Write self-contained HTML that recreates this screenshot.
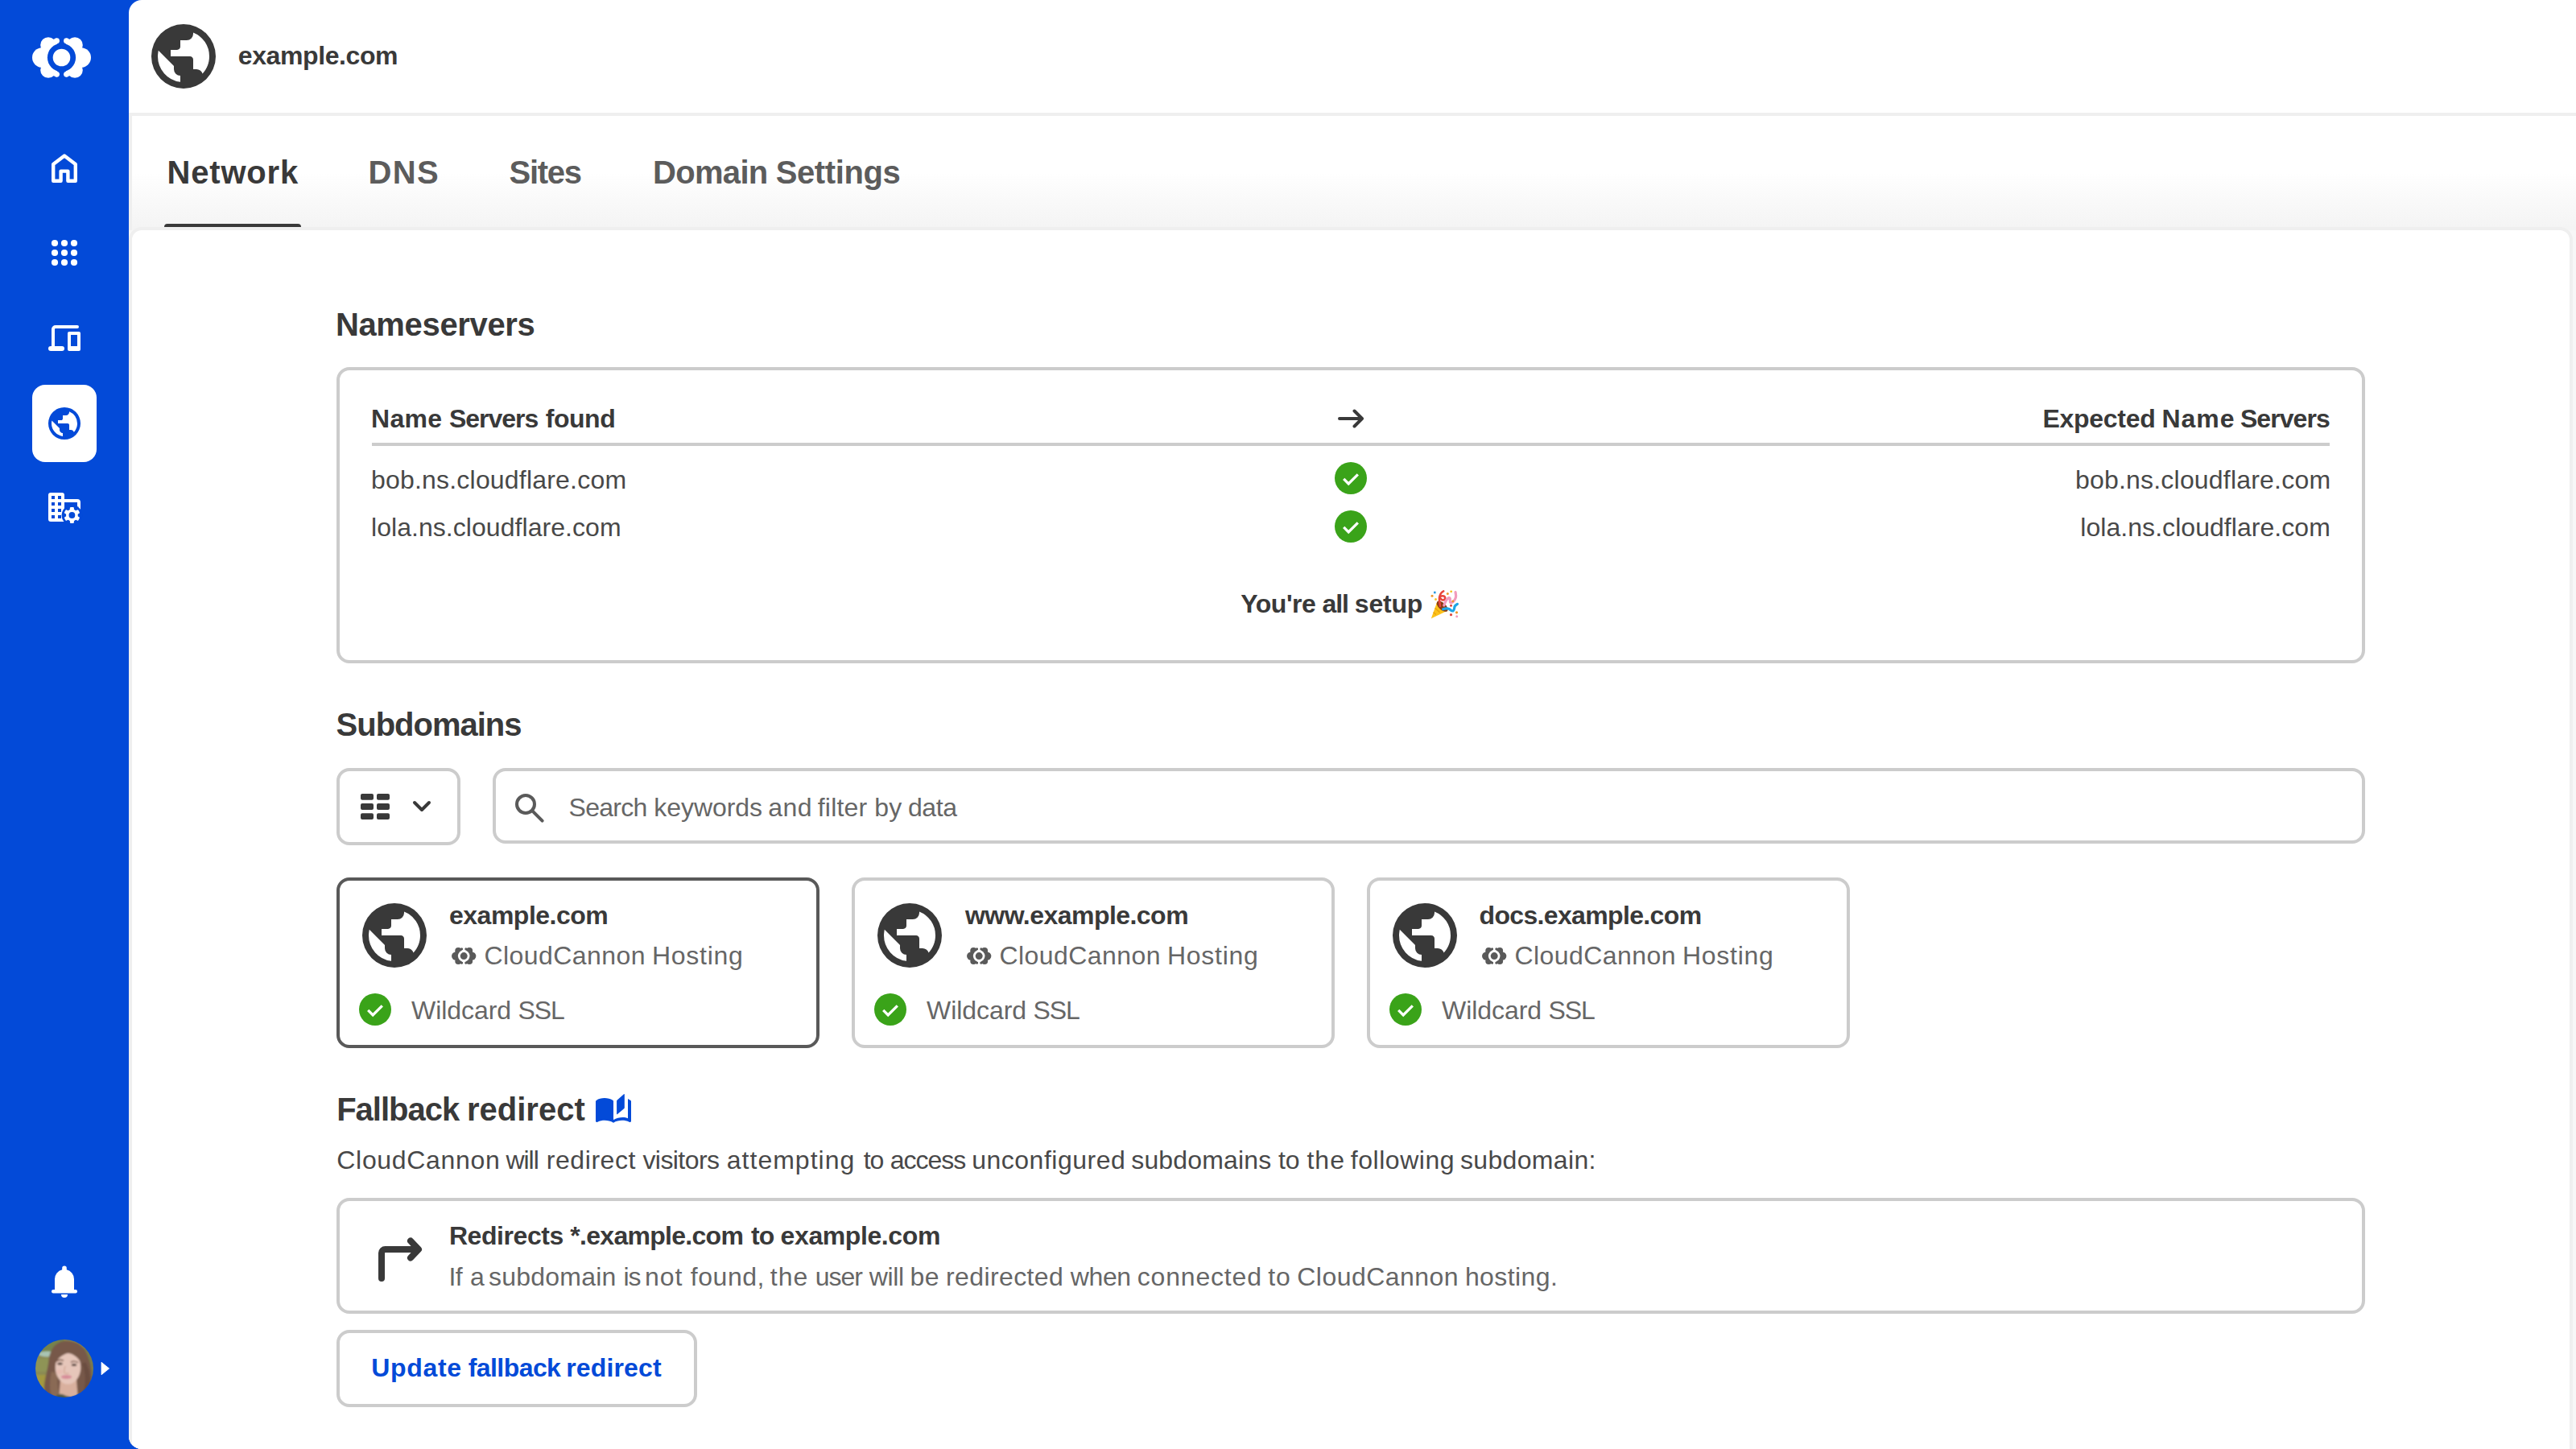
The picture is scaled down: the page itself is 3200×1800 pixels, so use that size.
<!DOCTYPE html>
<html lang="en">
<head>
<meta charset="utf-8">
<title>example.com - Network - CloudCannon</title>
<style>
*{box-sizing:border-box;margin:0;padding:0}
html,body{width:3200px;height:1800px;overflow:hidden}
body{position:relative;background:#034ad8;font-family:"Liberation Sans",sans-serif;color:#393939;font-size:32px}
.t{position:absolute;white-space:nowrap;line-height:1;font-size:32px;font-weight:400;color:#484848}
.g{color:#666}
.b{font-weight:700;color:#393939}
.h{font-size:40px;font-weight:700;color:#393939}
.h.g{color:#5c5c5c}
.ic{position:absolute;display:block;overflow:visible}
.abs{position:absolute}
.side{position:absolute;left:0;top:0;width:160px;height:1800px;background:#034ad8}
.active-tile{position:absolute;left:40px;top:478px;width:80px;height:96px;border-radius:16px;background:#fff}
.main{position:absolute;left:160px;top:0;width:3040px;height:1800px;background:#fff;border-radius:16px 0 0 16px;overflow:hidden}
.hline{position:absolute;left:0;top:140px;width:3040px;height:4px;background:#efefef}
.tabs{position:absolute;left:0;top:144px;width:3040px;height:142px;border-left:4px solid #efefef;background:linear-gradient(#fff 0,#fff 70px,#f4f4f4 138px,#f4f4f4 142px)}
.under{position:absolute;left:204px;top:278px;width:170px;height:4px;background:#393939;border-radius:5px 5px 0 0}
.below{position:absolute;left:0;top:286px;width:3040px;height:1514px;background:#f7f7f7}
.page{position:absolute;left:0;top:282px;width:3036px;height:1600px;background:#fff;border:4px solid #efefef;border-radius:16px}
.box{position:absolute;background:#fff;border:4px solid #ccc;border-radius:16px}
.sub{width:600px;height:212px}
.sel{border-color:#595959}
.rule{position:absolute;left:462px;top:550px;width:2432px;height:4px;background:#ccc}
</style>
</head>
<body>
<nav class="side">
  <svg class="ic" style="left:40px;top:45.5px" width="73" height="51.0" viewBox="0 0 73 51"><g fill="#fff"><circle cx="12.3" cy="25.5" r="12.3"/><circle cx="20" cy="10" r="9.8"/><circle cx="20" cy="41" r="9.8"/><circle cx="30.500" cy="4.700" r="3.400"/><circle cx="30.500" cy="46.300" r="3.400"/><path d="M12 8 30.6 1.5 33.7 5 28 13 28 38 33.7 46 30.6 49.5 12 43Z"/><g transform="translate(73 0) scale(-1 1)"><circle cx="12.3" cy="25.5" r="12.3"/><circle cx="20" cy="10" r="9.8"/><circle cx="20" cy="41" r="9.8"/><circle cx="30.500" cy="4.700" r="3.400"/><circle cx="30.500" cy="46.300" r="3.400"/><path d="M12 8 30.6 1.5 33.7 5 28 13 28 38 33.7 46 30.6 49.5 12 43Z"/></g></g><circle cx="36.5" cy="25.5" r="17.6" fill="#034ad8"/><rect x="34" y="0" width="5" height="51" fill="#034ad8"/><circle cx="36.5" cy="25.5" r="10.8" fill="#fff"/></svg>
  <svg class="ic" style="left:56px;top:185px" width="48" height="48" viewBox="0 0 24 24"><path fill="none" stroke="#fff" stroke-width="2.200" stroke-linejoin="round" d="M5.100 19.900V9.450L12 4.300l6.900 5.150V19.900h-4.700v-6.100H9.800v6.100Z"/></svg>
  <svg class="ic" style="left:56px;top:290px" width="48" height="48" viewBox="0 0 24 24" fill="#fff"><circle cx="6" cy="6" r="2.050"/><circle cx="12" cy="6" r="2.050"/><circle cx="18" cy="6" r="2.050"/><circle cx="6" cy="12" r="2.050"/><circle cx="12" cy="12" r="2.050"/><circle cx="18" cy="12" r="2.050"/><circle cx="6" cy="18" r="2.050"/><circle cx="12" cy="18" r="2.050"/><circle cx="18" cy="18" r="2.050"/></svg>
  <svg class="ic" style="left:56px;top:396px" width="48" height="48" viewBox="0 0 24 24"><path fill="none" stroke="#fff" stroke-width="2" stroke-linecap="round" stroke-linejoin="round" d="M20 5H6.500A1.500 1.500 0 0 0 5 6.500V17"/><rect x="2" y="17" width="10" height="3" rx="1.500" fill="#fff"/><path fill="#fff" fill-rule="evenodd" d="M15 8h6a1 1 0 0 1 1 1v10a1 1 0 0 1-1 1h-6a1 1 0 0 1-1-1V9a1 1 0 0 1 1-1Zm1 2v7h4v-7Z"/></svg>
  <div class="active-tile"></div>
  <svg class="ic" style="left:56px;top:502px" width="48" height="48" viewBox="0 -960 960 960"><path fill="#034ad8" d="M480-80q-83 0-156-31.500T197-197q-54-54-85.500-127T80-480q0-83 31.500-156T197-763q54-54 127-85.500T480-880q83 0 156 31.500T763-763q54 54 85.500 127T880-480q0 83-31.500 156T763-197q-54 54-127 85.500T480-80Zm-40-82v-78q-33 0-56.500-23.500T360-320v-40L168-552q-3 18-5.500 36t-2.500 36q0 121 79.500 212T440-162Zm276-102q20-22 36-47.500t26.500-53q10.500-27.500 16-56.500t5.500-59q0-98-54.500-179T600-776v16q0 33-23.500 56.500T520-680h-80v80q0 17-11.500 28.500T400-560h-80v80h240q17 0 28.500 11.500T600-440v120h40q26 0 47 15.500t29 40.500Z"/></svg>
  <svg class="ic" style="left:56px;top:606px" width="48" height="48" viewBox="0 0 24 24"><path fill="#fff" fill-rule="evenodd" d="M3.500 3h7A1.500 1.500 0 0 1 12 4.500V7h8a2 2 0 0 1 2 2v6h-2V9h-8v12H3.500A1.500 1.500 0 0 1 2 19.500v-15A1.500 1.500 0 0 1 3.500 3ZM4 5v2h2V5Zm4 0v2h2V5ZM4 9v2h2V9Zm4 0v2h2V9Zm-4 4v2h2v-2Zm4 0v2h2v-2Zm-4 4v2h2v-2Zm4 0v2h2v-2Z"/><circle cx="16.700" cy="17" r="6.400" fill="#034ad8"/><g fill="#fff" transform="translate(16.700 17)"><circle r="3.700"/><rect x="-1.250" y="-5" width="2.500" height="10" rx=".6"/><rect x="-1.250" y="-5" width="2.500" height="10" rx=".6" transform="rotate(60)"/><rect x="-1.250" y="-5" width="2.500" height="10" rx=".6" transform="rotate(120)"/></g><circle cx="16.700" cy="17" r="1.950" fill="#034ad8"/></svg>
  <svg class="ic" style="left:56px;top:1568px" width="48" height="48" viewBox="0 0 24 24" fill="#fff"><path d="M6 17.200V10.500a6 6 0 0 1 4.600-5.850V3.600a1.400 1.400 0 0 1 2.800 0v1.050A6 6 0 0 1 18 10.500v6.700Z"/><rect x="4" y="17" width="16" height="2.200" rx="1.100"/><path d="M10 20h4a2 2 0 0 1-4 0Z"/></svg>
  <svg class="ic" style="left:44px;top:1664px" width="72" height="72" viewBox="0 0 72 72"><defs><clipPath id="av"><circle cx="36" cy="36" r="36"/></clipPath><filter id="soft" x="-10%" y="-10%" width="120%" height="120%"><feGaussianBlur stdDeviation="1.100"/></filter></defs><g clip-path="url(#av)"><g filter="url(#soft)"><rect x="-4" y="-4" width="80" height="80" fill="#8b8a52"/><rect x="-4" y="-4" width="40" height="22" fill="#74824d"/><ellipse cx="15" cy="18" rx="11" ry="3.600" fill="#a9c4b3"/><rect x="-4" y="24" width="24" height="16" fill="#8e9457"/><rect x="-4" y="44" width="22" height="32" fill="#a3983f"/><path d="M58 10h18v40H60Z" fill="#7a7c4c"/><path d="M40 1.500C26 1 18 12 16.500 26 15 40 10 52 11 64c.5 6 4 12 8 14h40c6-6 10-16 11-26 1-12-2-24-6-34C60 8 52 2 40 1.500Z" fill="#77594a"/><path d="M20 40c-2 10-4 22 2 36h12c-6-10-8-22-6-34Z" fill="#8a6a55"/><path d="M58 30c4 10 6 24 0 40l8-6c4-12 2-26-4-36Z" fill="#6a4d3f"/><path d="M31 50h20l2 26H29Z" fill="#d9b09e"/><path d="M22 76c3-8 8-10 14-7 6 3 12 3 17-1 4 2 6 5 7 8Z" fill="#4d5a4a"/><ellipse cx="40.500" cy="34.500" rx="15.800" ry="21" fill="#e6c6ba"/><path d="M24 31c1-14 9-21 19-20 9 1 14 8 14.500 19C53 22 47 17.500 40 17c-7 2-12 6-16 14Z" fill="#77594a"/><path d="M26 27c2-1.600 6-2 9-.8" stroke="#6a4a3c" stroke-width="1.400" fill="none"/><path d="M44 28c3-1.400 6-1.200 9 .6" stroke="#6a4a3c" stroke-width="1.400" fill="none"/><ellipse cx="30.500" cy="30" rx="3.200" ry="1.500" fill="#4b3a35"/><ellipse cx="48" cy="31.500" rx="3.200" ry="1.500" fill="#4b3a35"/><path d="M37 33c-1 4-2 6-1 8.500 2 1 4 1 5.500 0" stroke="#d3a594" stroke-width="1.300" fill="none"/><ellipse cx="38.500" cy="46.500" rx="6.600" ry="2.500" fill="#d78d99"/><ellipse cx="30" cy="40" rx="4" ry="3" fill="#e8b9b0" opacity=".6"/></g></g></svg>
  <svg class="ic" style="left:126px;top:1691px" width="10" height="18" viewBox="0 0 10 18"><path d="M0 1.200 9.600 9 0 16.800Z" fill="#fff" stroke="#fff" stroke-width=".8" stroke-linejoin="round"/></svg>
</nav>
<div class="main">
  <div class="hline"></div>
  <div class="tabs"></div>
  <div class="below"></div>
  <div class="page"></div>
</div>
<header>
  <svg class="ic" style="left:180px;top:22px" width="96" height="96" viewBox="0 -960 960 960"><path fill="#393939" d="M480-80q-83 0-156-31.500T197-197q-54-54-85.500-127T80-480q0-83 31.500-156T197-763q54-54 127-85.500T480-880q83 0 156 31.500T763-763q54 54 85.500 127T880-480q0 83-31.500 156T763-197q-54 54-127 85.500T480-80Zm-40-82v-78q-33 0-56.500-23.500T360-320v-40L168-552q-3 18-5.500 36t-2.500 36q0 121 79.500 212T440-162Zm276-102q20-22 36-47.500t26.500-53q10.500-27.500 16-56.500t5.500-59q0-98-54.500-179T600-776v16q0 33-23.500 56.500T520-680h-80v80q0 17-11.500 28.500T400-560h-80v80h240q17 0 28.500 11.500T600-440v120h40q26 0 47 15.500t29 40.500Z"/></svg>
  <h1 class="t b" style="left:295.8px;top:52.5px;letter-spacing:-0.4px;">example.com</h1>
</header>
<nav class="tabnav">
  <a class="t h" style="left:207.6px;top:194.1px;letter-spacing:0.79px;">Network</a>
  <a class="t h g" style="left:457.6px;top:194.1px;letter-spacing:1.3px;">DNS</a>
  <a class="t h g" style="left:632.5px;top:194.1px;letter-spacing:-1.25px;">Sites</a>
  <a class="t h g" style="left:811px;top:194.1px;"><span style="letter-spacing:-0.68px">Domain</span> <span style="letter-spacing:-0.4px;margin-left:-1px">Settings</span></a>
  <div class="under"></div>
</nav>
<main>
  <section>
    <h2 class="t h" style="left:416.9px;top:383.1px;letter-spacing:-0.34px;">Nameservers</h2>
    <div class="box" style="left:418px;top:456px;width:2520px;height:368px"></div>
    <span class="t b" style="left:461px;top:503.5px;"><span style="letter-spacing:0.33px">Name</span> <span style="letter-spacing:-1px;margin-left:-0.5px">Servers</span> <span style="letter-spacing:-0.45px;margin-left:0.5px">found</span></span>
    <svg class="ic" style="left:1658px;top:504px" width="40" height="32" viewBox="0 0 40 32"><path d="M6 16h28M24.500 6.500 34 16l-9.500 9.500" fill="none" stroke="#393939" stroke-width="4" stroke-linecap="round" stroke-linejoin="round"/></svg>
    <span class="t b" style="left:2537.4px;top:503.5px;"><span style="letter-spacing:-0.27px">Expected</span> <span style="letter-spacing:1px;margin-left:-1px">Name</span> <span style="letter-spacing:-0.95px;margin-left:-2.5px">Servers</span></span>
    <div class="rule"></div>
    <span class="t" style="left:461.0px;top:579.7px;letter-spacing:0.2px;">bob.ns.cloudflare.com</span>
    <svg class="ic" style="left:1654px;top:570px" width="48" height="48" viewBox="0 0 48 48"><circle cx="24" cy="24" r="20" fill="#3aa319"/><path d="M15.200 24.900 21.200 30.900 32.800 19.300" fill="none" stroke="#fff" stroke-width="3.300" stroke-linecap="butt" stroke-linejoin="miter"/></svg>
    <span class="t" style="left:2578.0px;top:579.7px;letter-spacing:0.2px;">bob.ns.cloudflare.com</span>
    <span class="t" style="left:461.0px;top:639.3px;letter-spacing:0.05px;">lola.ns.cloudflare.com</span>
    <svg class="ic" style="left:1654px;top:630px" width="48" height="48" viewBox="0 0 48 48"><circle cx="24" cy="24" r="20" fill="#3aa319"/><path d="M15.200 24.900 21.200 30.900 32.800 19.300" fill="none" stroke="#fff" stroke-width="3.300" stroke-linecap="butt" stroke-linejoin="miter"/></svg>
    <span class="t" style="left:2584.3px;top:639.3px;letter-spacing:0.05px;">lola.ns.cloudflare.com</span>
    <strong class="t b" style="left:1541.2px;top:734.3px;"><span style="letter-spacing:-0.44px">You're</span> <span style="letter-spacing:-1px;margin-left:-1px">all</span> <span style="letter-spacing:-0.22px;margin-left:-1px">setup</span></strong>
    <span class="t" style="left:1777px;top:733px;width:36px;height:36px;font-size:30px;opacity:0;overflow:hidden">&#127881;</span>
    <svg class="ic" style="left:1777px;top:733px" width="36" height="36" viewBox="0 0 36 36"><path d="M.8 35.400 8.300 14.600C11 13 22 22 21.200 25.600Z" fill="#fcc21b"/><path d="M3.600 27.600 6.800 30.400M5.600 22.200l6 5.600M7.600 17l9.600 8.600" stroke="#e9a20f" stroke-width="1.300" fill="none"/><ellipse cx="14.700" cy="20.200" rx="8.600" ry="4.300" transform="rotate(42 14.700 20.200)" fill="#8a3c14"/><path d="M12 20c-.4-4-1.600-8-.8-11.600.6-2.600 1.800-5.600 5-7M11.600 9.400c1-2.800 6-3 6.600.2.400 2.800-3.600 4-5 1.400" fill="none" stroke="#e8453c" stroke-width="2.600" stroke-linecap="round"/><path d="M16.800 19c1.400-3.600 3-8.600 6-9.400 3.200-.6.200 5.400 2.200 6 2.400.6 5.600-3 6.400-6.400.6-2.600 0-4.600-.4-6.600" fill="none" stroke="#f29bbd" stroke-width="3.200" stroke-linecap="round" stroke-linejoin="round"/><path d="M15.600 23.800c2.600-1 5.200-1.400 7.400-.4 2 1 3.400 3.400 5.200 2.400 2-1.200 1-4.400 2.200-6 .8-1.200 2-1.800 3-2.400" fill="none" stroke="#1ea6e6" stroke-width="3.200" stroke-linecap="round" stroke-linejoin="round"/><g><rect x="4" y="1.700" width="2.600" height="2.600" fill="#2f9be0"/><circle cx="2" cy="7.300" r="1.500" fill="#f0962a"/><circle cx="6.500" cy="11.400" r="1.500" fill="#f7c32d"/><circle cx="21.300" cy="4.600" r="1.500" fill="#f0962a"/><circle cx="25.700" cy="1.800" r="1.400" fill="#f2c21f"/><circle cx="27.800" cy="13.900" r="1.400" fill="#f0962a"/><circle cx="25.500" cy="19.300" r="1.500" fill="#e0453a"/><circle cx="32.500" cy="27.800" r="1.600" fill="#f0962a"/><circle cx="25.500" cy="30.700" r="1.600" fill="#e0453a"/><circle cx="32.700" cy="32.700" r="1.500" fill="#f29bbd"/></g></svg>
  </section>
  <section>
    <h2 class="t h" style="left:417.6px;top:880.4px;letter-spacing:-1.01px;">Subdomains</h2>
    <button class="box" style="left:418px;top:954px;width:154px;height:96px"></button>
    <svg class="ic" style="left:448px;top:986px" width="36" height="32" viewBox="0 0 36 32" fill="#393939"><rect x="0" y="0" width="16" height="7.800" rx="2"/><rect x="20" y="0" width="16" height="7.800" rx="2"/><rect x="0" y="12.100" width="16" height="7.800" rx="2"/><rect x="20" y="12.100" width="16" height="7.800" rx="2"/><rect x="0" y="24.200" width="16" height="7.800" rx="2"/><rect x="20" y="24.200" width="16" height="7.800" rx="2"/></svg>
    <svg class="ic" style="left:510px;top:990px" width="28" height="22" viewBox="0 0 28 22"><path d="M5 7l9 9 9-9" fill="none" stroke="#393939" stroke-width="4" stroke-linecap="round" stroke-linejoin="round"/></svg>
    <div class="box" style="left:612px;top:954px;width:2326px;height:94px"></div>
    <svg class="ic" style="left:634px;top:980px" width="48" height="48" viewBox="0 0 24 24"><circle cx="9.500" cy="9.500" r="5.500" fill="none" stroke="#5a5a5a" stroke-width="2"/><path d="M13.700 13.700 19.800 19.800" stroke="#5a5a5a" stroke-width="2" stroke-linecap="round"/></svg>
    <span class="t g" style="left:706.6px;top:987.0px;"><span style="letter-spacing:-0.76px">Search</span> <span style="letter-spacing:-0.08px">keywords</span> <span style="letter-spacing:0.4px;margin-left:-1.5px">and</span> <span style="letter-spacing:0.2px;margin-left:-2px">filter</span> <span style="letter-spacing:0.2px">by</span> <span style="letter-spacing:-0.33px;margin-left:-1.5px">data</span></span>
    
      <article class="box sub sel" style="left:418px;top:1090px"></article>
      <svg class="ic" style="left:442px;top:1114px" width="96" height="96" viewBox="0 -960 960 960"><path fill="#393939" d="M480-80q-83 0-156-31.500T197-197q-54-54-85.500-127T80-480q0-83 31.500-156T197-763q54-54 127-85.500T480-880q83 0 156 31.500T763-763q54 54 85.500 127T880-480q0 83-31.500 156T763-197q-54 54-127 85.500T480-80Zm-40-82v-78q-33 0-56.500-23.500T360-320v-40L168-552q-3 18-5.500 36t-2.500 36q0 121 79.500 212T440-162Zm276-102q20-22 36-47.500t26.500-53q10.500-27.500 16-56.500t5.500-59q0-98-54.500-179T600-776v16q0 33-23.500 56.500T520-680h-80v80q0 17-11.500 28.500T400-560h-80v80h240q17 0 28.500 11.500T600-440v120h40q26 0 47 15.500t29 40.500Z"/></svg>
      <h3 class="t b" style="left:558.0px;top:1120.9px;letter-spacing:-0.5px;">example.com</h3>
      <svg class="ic" style="left:561px;top:1177.2px" width="30.4" height="21.2" viewBox="0 0 73 51"><g fill="#5a5a5a"><circle cx="12.3" cy="25.5" r="12.3"/><circle cx="20" cy="10" r="9.8"/><circle cx="20" cy="41" r="9.8"/><circle cx="30.500" cy="4.700" r="3.400"/><circle cx="30.500" cy="46.300" r="3.400"/><path d="M12 8 30.6 1.5 33.7 5 28 13 28 38 33.7 46 30.6 49.5 12 43Z"/><g transform="translate(73 0) scale(-1 1)"><circle cx="12.3" cy="25.5" r="12.3"/><circle cx="20" cy="10" r="9.8"/><circle cx="20" cy="41" r="9.8"/><circle cx="30.500" cy="4.700" r="3.400"/><circle cx="30.500" cy="46.300" r="3.400"/><path d="M12 8 30.6 1.5 33.7 5 28 13 28 38 33.7 46 30.6 49.5 12 43Z"/></g></g><circle cx="36.5" cy="25.5" r="17.6" fill="#fff"/><rect x="34" y="0" width="5" height="51" fill="#fff"/><circle cx="36.5" cy="25.5" r="10.8" fill="#5a5a5a"/></svg>
      <span class="t g" style="left:601.5px;top:1170.9px;"><span style="letter-spacing:0.44px">CloudCannon</span> <span style="letter-spacing:0.74px;margin-left:-1px">Hosting</span></span>
      <svg class="ic" style="left:442px;top:1230px" width="48" height="48" viewBox="0 0 48 48"><circle cx="24" cy="24" r="20" fill="#3aa319"/><path d="M15.200 24.900 21.200 30.900 32.800 19.300" fill="none" stroke="#fff" stroke-width="3.300" stroke-linecap="butt" stroke-linejoin="miter"/></svg>
      <span class="t g" style="left:511px;top:1239.2px;"><span style="letter-spacing:-0.06px">Wildcard</span> <span style="letter-spacing:-1px;margin-left:-0.5px">SSL</span></span>
    
      <article class="box sub" style="left:1058px;top:1090px"></article>
      <svg class="ic" style="left:1082px;top:1114px" width="96" height="96" viewBox="0 -960 960 960"><path fill="#393939" d="M480-80q-83 0-156-31.500T197-197q-54-54-85.500-127T80-480q0-83 31.500-156T197-763q54-54 127-85.500T480-880q83 0 156 31.500T763-763q54 54 85.500 127T880-480q0 83-31.500 156T763-197q-54 54-127 85.500T480-80Zm-40-82v-78q-33 0-56.500-23.500T360-320v-40L168-552q-3 18-5.500 36t-2.500 36q0 121 79.500 212T440-162Zm276-102q20-22 36-47.500t26.500-53q10.500-27.500 16-56.500t5.500-59q0-98-54.500-179T600-776v16q0 33-23.500 56.500T520-680h-80v80q0 17-11.500 28.500T400-560h-80v80h240q17 0 28.500 11.500T600-440v120h40q26 0 47 15.500t29 40.500Z"/></svg>
      <h3 class="t b" style="left:1199.0px;top:1120.9px;letter-spacing:-0.54px;">www.example.com</h3>
      <svg class="ic" style="left:1201px;top:1177.2px" width="30.4" height="21.2" viewBox="0 0 73 51"><g fill="#5a5a5a"><circle cx="12.3" cy="25.5" r="12.3"/><circle cx="20" cy="10" r="9.8"/><circle cx="20" cy="41" r="9.8"/><circle cx="30.500" cy="4.700" r="3.400"/><circle cx="30.500" cy="46.300" r="3.400"/><path d="M12 8 30.6 1.5 33.7 5 28 13 28 38 33.7 46 30.6 49.5 12 43Z"/><g transform="translate(73 0) scale(-1 1)"><circle cx="12.3" cy="25.5" r="12.3"/><circle cx="20" cy="10" r="9.8"/><circle cx="20" cy="41" r="9.8"/><circle cx="30.500" cy="4.700" r="3.400"/><circle cx="30.500" cy="46.300" r="3.400"/><path d="M12 8 30.6 1.5 33.7 5 28 13 28 38 33.7 46 30.6 49.5 12 43Z"/></g></g><circle cx="36.5" cy="25.5" r="17.6" fill="#fff"/><rect x="34" y="0" width="5" height="51" fill="#fff"/><circle cx="36.5" cy="25.5" r="10.8" fill="#5a5a5a"/></svg>
      <span class="t g" style="left:1241.5px;top:1170.9px;"><span style="letter-spacing:0.44px">CloudCannon</span> <span style="letter-spacing:0.74px;margin-left:-1px">Hosting</span></span>
      <svg class="ic" style="left:1082px;top:1230px" width="48" height="48" viewBox="0 0 48 48"><circle cx="24" cy="24" r="20" fill="#3aa319"/><path d="M15.200 24.900 21.200 30.900 32.800 19.300" fill="none" stroke="#fff" stroke-width="3.300" stroke-linecap="butt" stroke-linejoin="miter"/></svg>
      <span class="t g" style="left:1151px;top:1239.2px;"><span style="letter-spacing:-0.06px">Wildcard</span> <span style="letter-spacing:-1px;margin-left:-0.5px">SSL</span></span>
    
      <article class="box sub" style="left:1698px;top:1090px"></article>
      <svg class="ic" style="left:1722px;top:1114px" width="96" height="96" viewBox="0 -960 960 960"><path fill="#393939" d="M480-80q-83 0-156-31.500T197-197q-54-54-85.500-127T80-480q0-83 31.500-156T197-763q54-54 127-85.500T480-880q83 0 156 31.500T763-763q54 54 85.500 127T880-480q0 83-31.500 156T763-197q-54 54-127 85.500T480-80Zm-40-82v-78q-33 0-56.500-23.500T360-320v-40L168-552q-3 18-5.500 36t-2.500 36q0 121 79.500 212T440-162Zm276-102q20-22 36-47.500t26.500-53q10.500-27.500 16-56.500t5.500-59q0-98-54.500-179T600-776v16q0 33-23.500 56.500T520-680h-80v80q0 17-11.500 28.500T400-560h-80v80h240q17 0 28.500 11.500T600-440v120h40q26 0 47 15.500t29 40.500Z"/></svg>
      <h3 class="t b" style="left:1837.5px;top:1120.9px;letter-spacing:-0.65px;">docs.example.com</h3>
      <svg class="ic" style="left:1841px;top:1177.2px" width="30.4" height="21.2" viewBox="0 0 73 51"><g fill="#5a5a5a"><circle cx="12.3" cy="25.5" r="12.3"/><circle cx="20" cy="10" r="9.8"/><circle cx="20" cy="41" r="9.8"/><circle cx="30.500" cy="4.700" r="3.400"/><circle cx="30.500" cy="46.300" r="3.400"/><path d="M12 8 30.6 1.5 33.7 5 28 13 28 38 33.7 46 30.6 49.5 12 43Z"/><g transform="translate(73 0) scale(-1 1)"><circle cx="12.3" cy="25.5" r="12.3"/><circle cx="20" cy="10" r="9.8"/><circle cx="20" cy="41" r="9.8"/><circle cx="30.500" cy="4.700" r="3.400"/><circle cx="30.500" cy="46.300" r="3.400"/><path d="M12 8 30.6 1.5 33.7 5 28 13 28 38 33.7 46 30.6 49.5 12 43Z"/></g></g><circle cx="36.5" cy="25.5" r="17.6" fill="#fff"/><rect x="34" y="0" width="5" height="51" fill="#fff"/><circle cx="36.5" cy="25.5" r="10.8" fill="#5a5a5a"/></svg>
      <span class="t g" style="left:1881.5px;top:1170.9px;"><span style="letter-spacing:0.44px">CloudCannon</span> <span style="letter-spacing:0.74px;margin-left:-1px">Hosting</span></span>
      <svg class="ic" style="left:1722px;top:1230px" width="48" height="48" viewBox="0 0 48 48"><circle cx="24" cy="24" r="20" fill="#3aa319"/><path d="M15.200 24.900 21.200 30.900 32.800 19.300" fill="none" stroke="#fff" stroke-width="3.300" stroke-linecap="butt" stroke-linejoin="miter"/></svg>
      <span class="t g" style="left:1791px;top:1239.2px;"><span style="letter-spacing:-0.06px">Wildcard</span> <span style="letter-spacing:-1px;margin-left:-0.5px">SSL</span></span>
  </section>
  <section>
    <h2 class="t h" style="left:418.2px;top:1358.2px;"><span style="letter-spacing:-1px">Fallback</span> <span style="letter-spacing:0.02px;margin-left:-1.5px">redirect</span></h2>
    <svg class="ic" style="left:738px;top:1356px" width="48" height="48" viewBox="0 0 48 48" fill="#034ad8"><path d="M2 12.300Q2 11.400 2.800 11C8 7.200 17.500 7.200 23.200 10.800Q24 11.200 24 12V38.800C18 35.100 10 35.100 4.400 37.700Q2 38.700 2 36.600Z"/><path d="M24 38.800C30 35.100 38 35.100 43.600 37.700Q46 38.700 46 36.600V12.300Q46 11.500 45.400 11.100L42 9V33.200C38 31.400 30 31.400 24 35.200Z"/><path d="M28.100 11.700Q28.100 11.200 28.500 10.800L36.900 3.200Q37.800 2.400 37.800 3.600V20.100Q37.800 20.600 37.400 21L29 28Q28.100 28.700 28.100 27.700Z"/></svg>
    <p class="t" style="left:418.3px;top:1425.2px;"><span style="letter-spacing:0.68px">CloudCannon</span> <span style="letter-spacing:-0.99px;margin-left:-2px">will</span> <span style="letter-spacing:0.57px;margin-left:1px">redirect</span> <span style="letter-spacing:-0.57px;margin-left:-0.5px">visitors</span> <span style="letter-spacing:1px;margin-left:0.5px">attempting</span> <span style="letter-spacing:-1px;margin-left:1.5px">to</span> <span style="letter-spacing:-1px;margin-left:-0.5px">access</span> <span style="letter-spacing:0.51px;margin-left:-1px">unconfigured</span> <span style="letter-spacing:0.17px;margin-left:-2px">subdomains</span> <span style="margin-left:-0.5px">to</span> <span style="letter-spacing:1px">the</span> <span style="letter-spacing:0.53px;margin-left:-2px">following</span> <span style="letter-spacing:0.33px;margin-left:-2px">subdomain:</span></p>
    <div class="box" style="left:418px;top:1488px;width:2520px;height:144px"></div>
    <svg class="ic" style="left:442px;top:1516px" width="96" height="96" viewBox="0 0 96 96"><path d="M32 72V40.500a4.500 4.500 0 0 1 4.500-4.500H77.500M68 25.500 78 36 68 46.500" fill="none" stroke="#393939" stroke-width="8" stroke-linecap="round" stroke-linejoin="round"/></svg>
    <h3 class="t b" style="left:557.9px;top:1519.1px;"><span style="letter-spacing:-0.42px">Redirects</span> <span style="letter-spacing:-0.72px;margin-left:-0.5px">*.example.com</span> <span style="letter-spacing:-1px;margin-left:1px">to</span> <span style="letter-spacing:-0.4px;margin-left:-0.5px">example.com</span></h3>
    <p class="t g" style="left:557.4px;top:1569.6px;"><span style="letter-spacing:-0.6px">If</span> <span style="margin-left:1px">a</span> <span style="letter-spacing:0.22px;margin-left:-3.5px">subdomain</span> <span style="letter-spacing:-1px">is</span> <span style="letter-spacing:1px;margin-left:-3.5px">not</span> <span style="letter-spacing:0.52px;margin-left:0.5px">found,</span> <span style="letter-spacing:1px;margin-left:-2px">the</span> <span style="letter-spacing:-1px;margin-left:-0.5px">user</span> <span style="letter-spacing:-0.41px">will</span> <span style="letter-spacing:0.5px;margin-left:-1px">be</span> <span style="letter-spacing:0.39px;margin-left:-1px">redirected</span> <span style="letter-spacing:-0.33px;margin-left:-0.5px">when</span> <span style="letter-spacing:0.82px;margin-left:-1px">connected</span> <span style="letter-spacing:1px;margin-left:-1.5px">to</span> <span style="letter-spacing:0.46px;margin-left:-1.5px">CloudCannon</span> <span style="letter-spacing:0.4px;margin-left:-1px">hosting.</span></p>
    <button class="box" style="left:418px;top:1652px;width:448px;height:96px"></button>
    <span class="t b" style="left:461.3px;top:1683.3px;color:#034ad8;"><span style="letter-spacing:0.68px">Update</span> <span style="letter-spacing:-0.57px;margin-left:-1px">fallback</span> <span style="letter-spacing:0.14px;margin-left:-2px">redirect</span></span>
  </section>
</main>
</body>
</html>
